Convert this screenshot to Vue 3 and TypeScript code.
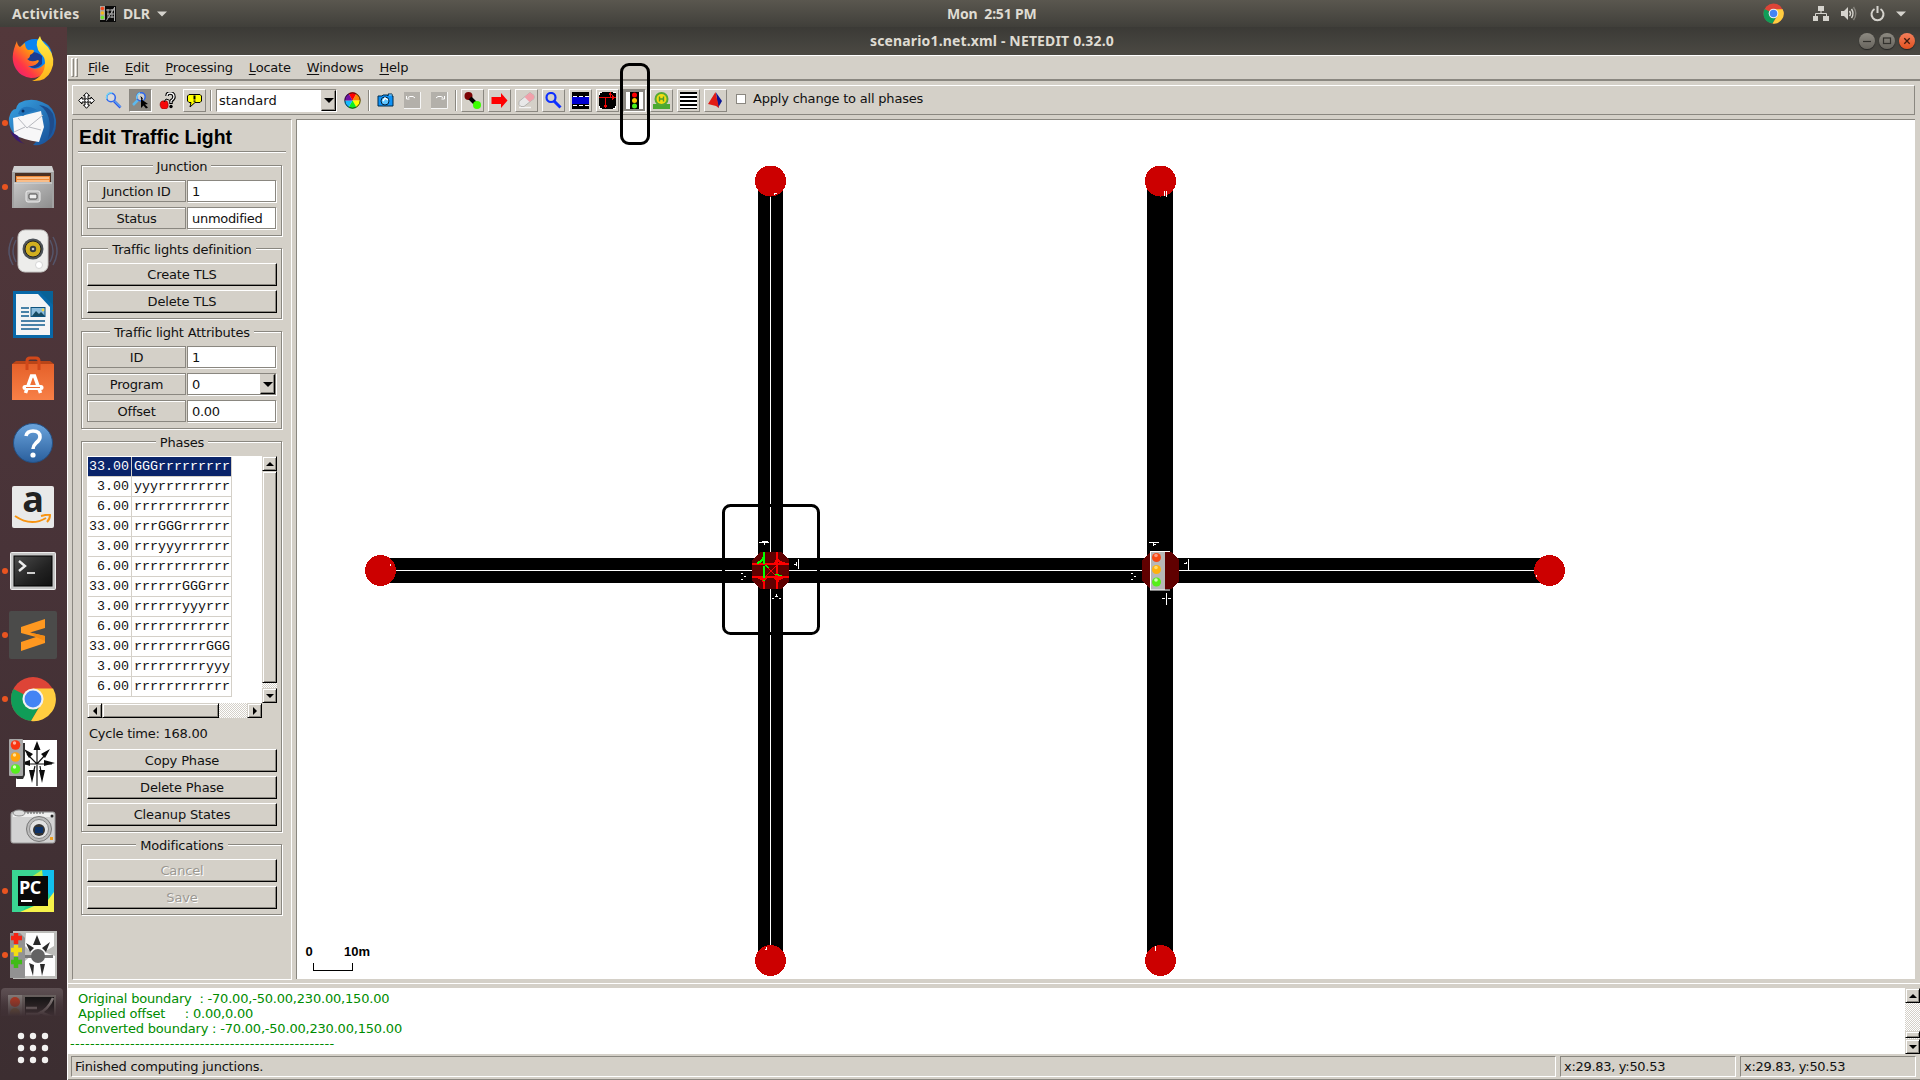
<script setup lang="ts">
interface Phase { duration: string; state: string }

const menus: string[] = ['File', 'Edit', 'Processing', 'Locate', 'Windows', 'Help']

const phases: Phase[] = [
  { duration: '33.00', state: 'GGGrrrrrrrrr' },
  { duration: '3.00', state: 'yyyrrrrrrrrr' },
  { duration: '6.00', state: 'rrrrrrrrrrrr' },
  { duration: '33.00', state: 'rrrGGGrrrrrr' },
  { duration: '3.00', state: 'rrryyyrrrrrr' },
  { duration: '6.00', state: 'rrrrrrrrrrrr' },
  { duration: '33.00', state: 'rrrrrrGGGrrr' },
  { duration: '3.00', state: 'rrrrrryyyrrr' },
  { duration: '6.00', state: 'rrrrrrrrrrrr' },
  { duration: '33.00', state: 'rrrrrrrrrGGG' },
  { duration: '3.00', state: 'rrrrrrrrryyy' },
  { duration: '6.00', state: 'rrrrrrrrrrrr' },
]

const log: string[] = [
  'Original boundary  : -70.00,-50.00,230.00,150.00',
  'Applied offset     : 0.00,0.00',
  'Converted boundary : -70.00,-50.00,230.00,150.00',
]
const rule = '-'.repeat(53)

const deadEnds: [number, number][] = [
  [770.5, 181], [1160.5, 181], [380.5, 570.5], [1549.5, 570.5], [770.5, 960.5], [1160.5, 960.5],
]
const gridDots: number[] = [6, 18, 30]
</script>

<template>
  <div class="desktop">
    <header class="topbar">
      <span class="activities">Activities</span>
      <svg class="app-icon" width="16" height="16" viewBox="0 0 16 16">
        <rect width="16" height="16" fill="#0a0a0a" />
        <rect width="5" height="14" fill="#a9a69f" />
        <circle cx="2.4" cy="2.5" r="1.8" fill="#f6461c" />
        <circle cx="2.4" cy="7" r="1.8" fill="#f4b51c" />
        <circle cx="2.4" cy="11.5" r="1.8" fill="#6be62c" />
        <path d="M6.500 14.500L14.500 1.500M6 4h8M7 8h7M9 11h5M8 3v9M12 3v9M14.500 1v14" stroke="#bbb" stroke-width=".9" fill="none" />
      </svg>
      <span class="app-name">DLR</span>
      <svg class="caret" width="10" height="6" viewBox="0 0 10 6"><path d="M0 .5h10L5 5.5z" fill="#d5d3cd" /></svg>
      <span class="clock">Mon&nbsp; 2:51 PM</span>
      <div class="tray">
        <svg class="tray-chrome" width="21" height="21" viewBox="0 0 48 48">
          <circle cx="24" cy="24" r="23" fill="#dd4437" />
          <path d="M3.5 13.5A23 23 0 0 0 22 47l9-16-7-7z" fill="#109d58" />
          <path d="M24 14h21A23 23 0 0 1 22 47l10-17z" fill="#ffcd40" />
          <circle cx="24" cy="24" r="11" fill="#f1f1f1" /><circle cx="24" cy="24" r="8.6" fill="#4384f4" />
        </svg>
        <svg class="tray-net" width="16" height="16" viewBox="0 0 16 16">
          <path d="M5 0h6v5H5zM0 10h5v5H0zM10 10h6v5h-6z" fill="#d5d3cd" />
          <path d="M8 5v3M2.500 10V7.500h11V10" fill="none" stroke="#d5d3cd" />
        </svg>
        <svg class="tray-sound" width="16" height="16" viewBox="0 0 16 16">
          <path d="M0 5h3l4-4v13l-4-4H0z" fill="#d5d3cd" />
          <path d="M8.500 5q2 2.500 0 5M10.500 3q3 4.500 0 9" fill="none" stroke="#d5d3cd" stroke-width="1.500" />
          <path d="M12.500 1q4.500 6.500 0 13" fill="none" stroke="#85827b" stroke-width="1.400" />
        </svg>
        <svg class="tray-power" width="15" height="16" viewBox="0 0 15 16">
          <path d="M4.500 3A6 6 0 1 0 10.500 3M7.500 0v7" fill="none" stroke="#d5d3cd" stroke-width="2" />
        </svg>
        <svg class="tray-caret" width="10" height="6" viewBox="0 0 10 6"><path d="M0 .5h10L5 5.500z" fill="#d5d3cd" /></svg>
      </div>
    </header>

    <div class="workspace">
      <nav class="dock">
        <div class="slot">
          <svg width="48" height="48" viewBox="0 0 48 48">
            <defs>
              <linearGradient id="ffx" x1="1" y1="0" x2="0" y2="1"><stop offset=".1" stop-color="#fff44f" /><stop offset=".4" stop-color="#ff980e" /><stop offset=".7" stop-color="#ff3647" /><stop offset="1" stop-color="#e31587" /></linearGradient>
              <linearGradient id="ffy" x1="0" y1="0" x2="0" y2="1"><stop offset="0" stop-color="#fff24a" /><stop offset="1" stop-color="#ffb319" /></linearGradient>
            </defs>
            <circle cx="26" cy="21" r="17" fill="#0a84f0" />
            <path d="M19 17q8-1 14 4v8q-8 8-15 0z" fill="#1c3b91" />
            <path d="M8 6q0 4 3 6l5-4q0 5 3 7 6-1 6 1 0 2-4 4 0 3-3 4 4 4 11 1l1 1q-3 6-11 5 6 5 13 1 8-5 6-14 8 8-2 19-5 6-14 6-10-1-15-9Q0 23 8 6z" fill="url(#ffx)" />
            <path d="M31 1q1 5 8 11 9 12 3 24-5 11-19 10 13-5 13-18 0-6-4-9-8-9-1-18z" fill="url(#ffy)" />
          </svg>
        </div>
        <div class="slot running">
          <svg width="50" height="50" viewBox="0 0 50 50">
            <defs><linearGradient id="tbd" x1="0" y1="0" x2="1" y2="1"><stop offset="0" stop-color="#39a5e4" /><stop offset="1" stop-color="#164a93" /></linearGradient></defs>
            <path d="M11 5Q22-1 34 4q12 4 14 18 1 15-9 21-5 5-14 4 4-4 5-6L9 39Q0 31 1 20q2-9 7-9Q9 7 11 5z" fill="url(#tbd)" />
            <path d="M31 7q15 9 9 34 9-12 5-25-4-8-14-9z" fill="#1e4c8b" />
            <path d="M5 20l28-7 3 16-5 15q-16-2-25-8z" fill="#f7f7f8" />
            <path d="M10 20l9 10 16-13M17 29l-11 5M21 29l12 3" fill="none" stroke="#b6b8be" />
            <path d="M10 16Q14 4 29 12q-9 2-14 6z" fill="#2275bc" /><circle cx="15" cy="13" r="1.500" fill="#0b2e5f" />
            <path d="M2 33q5 11 15 13-6-3-7-8z" fill="#3b1a70" />
          </svg>
        </div>
        <div class="slot running">
          <svg width="44" height="46" viewBox="0 0 44 46">
            <defs><linearGradient id="cab" x1="0" y1="0" x2="1" y2="1"><stop offset="0" stop-color="#c4c4c4" /><stop offset="1" stop-color="#8e8e8e" /></linearGradient></defs>
            <path d="M3 2h38l2 6v35H1V8z" fill="#cfcfcf" /><path d="M1 8h42v36H1z" fill="#a2a2a2" />
            <path d="M4 9h36v9H4z" fill="#4c3022" /><path d="M5 12h34v6H5z" fill="#f08a38" /><path d="M6 14h32M6 17h32" stroke="#fff0d9" stroke-width="1.200" />
            <path d="M3 19h38v25H3z" fill="url(#cab)" /><path d="M3 19h38" stroke="#ddd" />
            <rect x="15" y="27" width="14" height="11" rx="2" fill="#bdbdbd" stroke="#ececec" /><rect x="18" y="30" width="8" height="5" rx="1" fill="#eee" stroke="#444" />
          </svg>
        </div>
        <div class="slot">
          <svg width="50" height="46" viewBox="0 0 50 46">
            <path d="M5 9q-8 14 0 28M45 9q8 14 0 28M8 12q-6 11 0 22M42 12q6 11 0 22" fill="none" stroke="#55556a" stroke-width="1.500" />
            <rect x="10" y="2" width="30" height="42" rx="7" fill="#ededeb" stroke="#c7c7c5" />
            <circle cx="25" cy="21" r="10.500" fill="#4c5257" /><circle cx="25" cy="21" r="8" fill="#d1af20" stroke="#222" />
            <circle cx="25" cy="21" r="3.200" fill="#343b40" /><circle cx="25" cy="21" r="1.300" fill="#c8c8c8" /><circle cx="31" cy="37" r="3.500" fill="#fff" stroke="#d5d5d5" />
          </svg>
        </div>
        <div class="slot">
          <svg width="42" height="50" viewBox="0 0 42 50">
            <path d="M1 1h27l13 13v34H1z" fill="#0868a8" /><path d="M4 4h22l12 13v28H4z" fill="#f4f4f5" /><path d="M27 1h14v14z" fill="#086297" />
            <path d="M9 18h8M9 22h8M9 26h8M9 31h24M9 35h24M9 39h18" stroke="#105c8e" stroke-width="1.700" />
            <rect x="19" y="17.500" width="14" height="9" fill="#8cbcdc" stroke="#0d527e" /><path d="M20 26l4-5 3 3 2-2 4 4z" fill="#174b62" /><circle cx="31" cy="20" r="1.400" fill="#f3d344" />
          </svg>
        </div>
        <div class="slot">
          <svg width="44" height="46" viewBox="0 0 44 46">
            <defs><linearGradient id="bag" x1="0" y1="0" x2="0" y2="1"><stop offset="0" stop-color="#e5612a" /><stop offset="1" stop-color="#f78047" /></linearGradient></defs>
            <path d="M1 8h42v36H1z" fill="url(#bag)" /><path d="M1 8l4-3h34l4 3z" fill="#b94518" />
            <path d="M16 14V5q0-3 3-3h6q3 0 3 3v9" fill="none" stroke="#d1481a" stroke-width="3" />
            <path d="M14.500 37l6-17h3l6 17" fill="none" stroke="#fff" stroke-width="3.500" /><path d="M14 31.500h16" stroke="#fff" stroke-width="5" stroke-linecap="round" /><path d="M15 31.500h14" stroke="#ee6b32" stroke-width="1" />
          </svg>
        </div>
        <div class="slot">
          <svg width="42" height="42" viewBox="0 0 42 42">
            <defs><linearGradient id="hlp" x1="0" y1="0" x2="0" y2="1"><stop offset="0" stop-color="#6ba4dc" /><stop offset="1" stop-color="#2a5f9d" /></linearGradient></defs>
            <circle cx="21" cy="21" r="19.500" fill="url(#hlp)" stroke="#245084" />
            <path d="M14 14q1-5 7-5 7 0 7 6 0 3-4 6-3 3-3 6" fill="none" stroke="#fff" stroke-width="3.600" /><circle cx="21" cy="33" r="2.600" fill="#fff" />
          </svg>
        </div>
        <div class="slot">
          <div class="amazon">
            <span>a</span>
            <svg width="38" height="12" viewBox="0 0 38 12"><path d="M1 2Q17 13 32 4M27 2q7-2 9-1 0 4-3 7" fill="none" stroke="#f79311" stroke-width="2" /></svg>
          </div>
        </div>
        <div class="slot running">
          <svg width="46" height="38" viewBox="0 0 46 38">
            <defs><linearGradient id="trm" x1="0" y1="0" x2="1" y2="1"><stop offset="0" stop-color="#4b4b4b" /><stop offset=".6" stop-color="#222" /><stop offset="1" stop-color="#111" /></linearGradient></defs>
            <rect x=".5" y=".5" width="45" height="37" rx="1" fill="#c6c6c6" stroke="#eee" /><rect x="4" y="4" width="38" height="30" fill="url(#trm)" stroke="#000" />
            <path d="M9 9l6 5-6 5" fill="none" stroke="#eee" stroke-width="2.400" /><path d="M17 21h8" stroke="#eee" stroke-width="1.700" />
          </svg>
        </div>
        <div class="slot running">
          <svg width="48" height="48" viewBox="0 0 48 48">
            <rect width="48" height="48" rx="2" fill="#4b4b4a" />
            <path d="M12 16l24-8v9l-15 4.500L36 25v7l-24 8v-9l15-5-15-4z" fill="#ff9820" /><path d="M21 21.500L36 25v5l-9-4z" fill="#f28a13" />
          </svg>
        </div>
        <div class="slot running">
          <svg width="46" height="46" viewBox="0 0 48 48">
            <circle cx="24" cy="24" r="23" fill="#dd4437" />
            <path d="M3.500 13.500A23 23 0 0 0 22 47l10-17-8-6z" fill="#109d58" />
            <path d="M24 13h21A23 23 0 0 1 22 47l10-17z" fill="#ffcd40" />
            <circle cx="24" cy="24" r="11" fill="#f1f1f1" /><circle cx="24" cy="24" r="8.800" fill="#4384f4" />
          </svg>
        </div>
        <div class="slot">
          <svg width="48" height="48" viewBox="0 0 48 48">
            <rect x="7" y="1" width="41" height="47" fill="#fff" />
            <path d="M28 47V5M28 25L18 15M28 25l9-10M27 25H13M29 25h14M26 27l-3 12M31 27l2 12" stroke="#111" stroke-width="1.200" />
            <path d="M28 2l-3.500 9h7zM41 10l-9 5 4 4zM46 24l-11-3v6zM15 10l9 5-4 4zM12 24l9-3v6zM20 31h6l-3 13zM30 31h6l-3 13z" fill="#0c0c0c" />
            <path d="M3 36l5 4h6l2-4V4h-3z" fill="#333" /><rect width="14" height="37" rx="1" fill="#a7a7a7" />
            <circle cx="6.500" cy="6" r="4.800" fill="#f93511" /><circle cx="6.500" cy="18" r="4.800" fill="#ffa20b" /><circle cx="6.500" cy="30" r="4.800" fill="#57ee20" />
            <circle cx="5.500" cy="4" r="1.700" fill="#ffb39e" /><circle cx="5.500" cy="16" r="1.700" fill="#ffe39e" /><circle cx="5.500" cy="28" r="1.700" fill="#d7ffba" />
          </svg>
        </div>
        <div class="slot">
          <svg width="46" height="36" viewBox="0 0 46 36">
            <rect x="1" y="3" width="44" height="31" rx="2" fill="#d2d2d2" stroke="#9d9d9d" /><path d="M3 4h40v4H3z" fill="#efefef" />
            <ellipse cx="9" cy="4" rx="6" ry="3" fill="#ddd" stroke="#8a8a8a" /><path d="M17 4h18" stroke="#555" stroke-dasharray="2 1" />
            <circle cx="29" cy="20" r="12.500" fill="#bbb" stroke="#777" /><circle cx="29" cy="20" r="9.500" fill="#e1e1e1" stroke="#888" />
            <circle cx="29" cy="21" r="6" fill="#333" /><rect x="25" y="18" width="8" height="6" fill="#0d3267" /><circle cx="42" cy="7" r="1.500" fill="#222" /><rect x="40" y="28" width="3" height="3" fill="#f0a020" />
          </svg>
        </div>
        <div class="slot running">
          <div class="pycharm">
            <svg width="42" height="42" viewBox="0 0 42 42">
              <rect width="42" height="42" fill="#22d08c" /><path d="M0 0h15l15 0v10L10 42H0z" fill="#3ad693" /><path d="M30 0h12v30l-10-12z" fill="#12c0ed" /><path d="M30 0l-14 9h15z" fill="#b8ec50" /><path d="M42 22v20H8l28-12z" fill="#f6f24a" />
              <rect x="6" y="6" width="30" height="30" fill="#080808" /><path d="M9 31h11" stroke="#fff" stroke-width="2" />
            </svg>
            <span>PC</span>
          </div>
        </div>
        <div class="slot running">
          <svg width="48" height="48" viewBox="0 0 48 48">
            <rect x="4" width="44" height="48" fill="#bcbcb9" /><path d="M17 2h28v13L35 21l11 4v20H16V30l8-7-8-8z" fill="#fdfdfd" />
            <path d="M28 4l4 10h-8zM17 12l8 5-4 4zM41 11l-8 6 4 4zM20 32l5 2-1 11zM31 33h5l-3 12z" fill="#292929" /><path d="M16 24h28v3H16z" fill="#777" />
            <circle cx="29" cy="25" r="7" fill="#636363" /><path d="M1 2h10l5 5v40H1z" fill="#929292" />
            <path d="M7 2v11M2 7h11" stroke="#f42514" stroke-width="4.500" /><path d="M7 14v11M2 19h11" stroke="#f3dc13" stroke-width="4.500" /><path d="M7 26v11M2 31h11" stroke="#40bb17" stroke-width="4.500" />
          </svg>
        </div>
        <div class="slot partial">
          <svg width="48" height="22" viewBox="0 0 48 22">
            <rect width="48" height="22" fill="#69615f" /><rect x="17" y="2" width="29" height="20" fill="#111" /><path d="M18 19h12q10-4 15-16M32 17l12 5M18 13h11" fill="none" stroke="#8e8785" stroke-width="2.500" />
            <rect width="14" height="22" fill="#817a78" /><circle cx="7" cy="7" r="5" fill="#b23822" /><circle cx="7" cy="18" r="5" fill="#83633a" />
          </svg>
        </div>
        <svg class="apps" width="36" height="36" viewBox="0 0 36 36">
          <template v-for="y in gridDots" :key="y"><circle v-for="x in gridDots" :key="x" :cx="x" :cy="y" r="3.200" fill="#f2f1f0" /></template>
        </svg>
      </nav>

      <main class="window">
        <div class="titlebar">
          <span>scenario1.net.xml - NETEDIT 0.32.0</span>
          <div class="winbtns">
            <i><svg width="16" height="16" viewBox="0 0 16 16"><path d="M4 8.500h8" stroke="#32312d" stroke-width="1.200" /></svg></i>
            <i><svg width="16" height="16" viewBox="0 0 16 16"><rect x="4.500" y="5" width="7" height="5.500" fill="none" stroke="#32312d" stroke-width="1.200" /></svg></i>
            <i class="close"><svg width="16" height="16" viewBox="0 0 16 16"><path d="M5.300 5.300l5.400 5.400M10.700 5.300l-5.400 5.400" stroke="#3d1a0d" stroke-width="1.300" /></svg></i>
          </div>
        </div>

        <div class="client">
          <div class="menubar">
            <b class="grip"></b><b class="grip"></b>
            <span v-for="m in menus" :key="m" class="menu"><u>{{ m[0] }}</u>{{ m.slice(1) }}</span>
          </div>

          <div class="toolbar">
            <div class="tool">
              <svg width="17" height="17" viewBox="0 0 17 17"><path d="M8.500.7l3 3H10v3h3V5l3.300 3.500L13 12v-2h-3v3h1.500l-3 3.300-3-3.300H7v-3H4v2L.7 8.500 4 5v2h3V3.700H5.500z" fill="#fff" stroke="#000" /><circle cx="8.500" cy="8.500" r="1.800" fill="#fff" stroke="#000" /></svg>
            </div>
            <div class="tool">
              <svg width="17" height="17" viewBox="0 0 17 17"><path d="M9 9l6.500 6.500" stroke="#2a55e8" stroke-width="2.600" /><path d="M9.500 9l6 6" stroke="#7fdbf3" /><circle cx="6" cy="5.500" r="4.300" fill="#dadada" stroke="#3068ee" stroke-width="1.600" /><path d="M2 7a4.300 4.300 0 0 1 5-6" fill="none" stroke="#71d6f5" stroke-width="1.400" /></svg>
            </div>
            <div class="tool down">
              <svg width="17" height="17" viewBox="0 0 17 17"><path d="M6 8l-5 5" stroke="#5cb8ed" stroke-width="2.500" /><circle cx="9" cy="4.800" r="4.200" fill="#ccc" stroke="#3169e8" stroke-width="1.600" /><path d="M5 7a5 5 0 0 1 3-6" stroke="#79d9f5" fill="none" stroke-width="1.400" /><path d="M8 3l3 3v2H9z" fill="#000" stroke="#fff" stroke-width=".5" /><path d="M9 7l7 5-3 .5 3 3-2 1-2.500-3L9 16z" fill="#000" /></svg>
            </div>
            <div class="tool">
              <svg width="17" height="17" viewBox="0 0 17 17"><path d="M8 4q0-3 3-3 4 0 4 4 0 2-3 4v3" stroke="#000" stroke-width="3.500" fill="none" /><path d="M8 4q0-3 3-3 4 0 4 4 0 2-3 4v2" stroke="#fff" stroke-width="1.300" fill="none" /><circle cx="12" cy="14.500" r="1.700" fill="#000" /><path d="M6 9q-5-1-5 4 1 5 5 4 4 0 3-6l-1-2z" fill="#f60808" stroke="#700" stroke-width=".5" /><path d="M5 10l2-3 3 1" fill="none" stroke="#111" /></svg>
            </div>
            <div class="tool up">
              <svg width="17" height="17" viewBox="0 0 17 17"><path d="M3 2.500h11l1.500 1.500v5L14 10.500H9L4 15l1-4.500H3L1.500 9V4z" fill="#ff0" stroke="#000" /><path d="M8.500 3.500v4M8.500 8.500v1.200" stroke="#000" stroke-width="2" /></svg>
            </div>
            <b class="sep"></b>
            <div class="combo"><span>standard</span><b class="drop"><i></i></b></div>
            <div class="tool">
              <svg width="17" height="17" viewBox="-8.500 -8.500 17 17"><path d="M0 0L-4-7A8 8 0 0 1 4-7z" fill="#f00" /><path d="M0 0L4-7A8 8 0 0 1 8 0z" fill="#ff8500" /><path d="M0 0H8A8 8 0 0 1 4 7z" fill="#ff0" /><path d="M0 0L4 7A8 8 0 0 1-4 7z" fill="#0df020" /><path d="M0 0L-4 7A8 8 0 0 1-8 0z" fill="#15baff" /><path d="M0 0H-8A8 8 0 0 1-4-7z" fill="#7112a5" /><circle r="7.700" fill="none" stroke="#111" stroke-width=".8" /></svg>
            </div>
            <b class="sep"></b>
            <div class="tool">
              <svg width="17" height="17" viewBox="0 0 17 17"><path d="M1 4h4l1-1h4l1 1V2h4v2h1v10H1z" fill="#0e93f8" stroke="#012a4b" /><path d="M12 3h3" stroke="#8ad6ff" /><circle cx="8" cy="9" r="4" fill="#60c6ff" stroke="#05233d" /><path d="M6 9l2-3 3 2" stroke="#fff" stroke-width="1.500" fill="none" /></svg>
            </div>
            <div class="tool"><svg width="17" height="17" viewBox="0 0 17 17"><rect width="16" height="16" fill="#b3b0aa" /><path d="M0 16.500h16.500V0" stroke="#f5f5f5" fill="none" /><path d="M2.500 4v3h3M4 5.500l2-1h3l2 1.500" stroke="#fff" fill="none" /></svg></div>
            <div class="tool"><svg width="17" height="17" viewBox="0 0 17 17"><rect width="16" height="16" fill="#b3b0aa" /><path d="M0 16.500h16.500V0" stroke="#f5f5f5" fill="none" /><path d="M13.500 4v3h-3M12 5.500l-2-1H7L5 6" stroke="#fff" fill="none" /></svg></div>
            <b class="sep"></b>
            <div class="tool up"><svg width="17" height="17" viewBox="0 0 17 17"><circle cx="4.500" cy="4" r="4" fill="#7c0505" /><path d="M6 6l5 5" stroke="#000" stroke-width="4" /><circle cx="13" cy="13" r="4" fill="#3cff00" /></svg></div>
            <div class="tool up"><svg width="17" height="17" viewBox="0 0 17 17"><path d="M.5 5H10V1l6.500 7.500L10 16v-4H.500z" fill="#f00" /></svg></div>
            <div class="tool up"><svg width="17" height="17" viewBox="0 0 17 17"><path d="M1 15.500h12" stroke="#f3f3f3" stroke-width="1.500" /><path d="M12 .5l4 3v3L6 14.500H3L1 12.500v-3z" fill="#e8e8e8" stroke="#999" stroke-width=".6" /><path d="M12 .5l4 3v3l-4.500 3.500-5-5z" fill="#f1a0aa" /></svg></div>
            <div class="tool up"><svg width="17" height="17" viewBox="0 0 17 17"><circle cx="6" cy="5.500" r="4.500" fill="none" stroke="#0d2fff" stroke-width="2.200" /><path d="M9 9l6.500 6.500" stroke="#0d2fff" stroke-width="3" /></svg></div>
            <div class="tool up"><svg width="17" height="17" viewBox="0 0 17 17" shape-rendering="crispEdges"><rect width="17" height="17" /><path d="M0 5h17v7H0z" fill="#0000d2" /><path d="M1 4.500h4M7 4.500h4M13 4.500h4M1 13.500h4M7 13.500h4M13 13.500h4" stroke="#fff" /></svg></div>
            <div class="tool up"><svg width="17" height="17" viewBox="0 0 17 17" shape-rendering="crispEdges"><rect width="17" height="17" /><path d="M0 .5h3M.5 0v3M14 16.500h3M16.500 14v3M0 16.500h3M.5 14v3M14 .5h3" stroke="#fff" /><path d="M0 5.500h15M6.500 5v10M11.500 5V1" stroke="#ee0505" /><path d="M17 5.500l-4-2.500v5zM6.500 16.500L4 12.500h5zM11.500 0l-2 3h4z" fill="#ee0505" /></svg></div>
            <div class="tool down"><svg width="17" height="17" viewBox="0 0 17 17"><rect width="17" height="17" fill="#fff" /><rect x="4" width="9" height="17" /><circle cx="8.500" cy="3" r="2.500" fill="#f00" /><circle cx="8.500" cy="8.500" r="2.500" fill="#ffc800" /><circle cx="8.500" cy="14" r="2.500" fill="#4cf01e" /></svg></div>
            <div class="tool up"><svg width="17" height="17" viewBox="0 0 17 17"><path d="M0 12h17v5H0z" fill="#4aa931" /><circle cx="8.500" cy="7" r="7" fill="#54a935" /><circle cx="8.500" cy="7" r="5" fill="#f2dc11" /><path d="M6.500 4.500v5M10.500 4.500v5M6.500 7h4" stroke="#4d9c2b" stroke-width="1.400" /></svg></div>
            <div class="tool up"><svg width="17" height="17" viewBox="0 0 17 17" shape-rendering="crispEdges"><rect width="17" height="17" fill="#fff" /><path d="M0 1h17M0 5h17M0 9h17M0 13h17M0 17h17" stroke="#000" stroke-width="2" /></svg></div>
            <div class="tool up"><svg width="17" height="17" viewBox="0 0 17 17"><path d="M9 .5L15 9l-4 7z" fill="#0c1595" /><path d="M8.500 0L12 16l-3-2-8-2z" fill="#e11a15" /></svg></div>
            <label class="check"><i></i><span>Apply change to all phases</span></label>
          </div>

          <div class="body">
            <aside class="panel">
              <h1>Edit Traffic Light</h1>
              <section class="group">
                <h2>Junction</h2>
                <div class="row"><span class="key">Junction ID</span><span class="field">1</span></div>
                <div class="row"><span class="key">Status</span><span class="field">unmodified</span></div>
              </section>
              <section class="group">
                <h2>Traffic lights definition</h2>
                <button>Create TLS</button>
                <button>Delete TLS</button>
              </section>
              <section class="group">
                <h2>Traffic light Attributes</h2>
                <div class="row"><span class="key">ID</span><span class="field">1</span></div>
                <div class="row"><span class="key">Program</span><span class="field">0<b class="drop"><i></i></b></span></div>
                <div class="row"><span class="key">Offset</span><span class="field">0.00</span></div>
              </section>
              <section class="group">
                <h2>Phases</h2>
                <div class="tablebox">
                  <div class="sheet">
                    <div v-for="(p, i) in phases" :key="i" class="phase" :class="{ selected: i === 0 }">
                      <span class="dur">{{ p.duration }}</span><span class="state">{{ p.state }}</span>
                    </div>
                  </div>
                  <div class="vscroll">
                    <b class="sbtn"><i class="arr-up"></i></b><b class="thumb"></b><b class="track"></b><b class="sbtn"><i class="arr-down"></i></b>
                  </div>
                  <div class="hscroll">
                    <b class="sbtn"><i class="arr-left"></i></b><b class="thumb"></b><b class="track"></b><b class="sbtn"><i class="arr-right"></i></b>
                  </div>
                </div>
                <p class="cycle">Cycle time: 168.00</p>
                <button>Copy Phase</button>
                <button>Delete Phase</button>
                <button>Cleanup States</button>
              </section>
              <section class="group">
                <h2>Modifications</h2>
                <button disabled>Cancel</button>
                <button disabled>Save</button>
              </section>
            </aside>

            <div class="canvas">
              <svg width="1617" height="859" viewBox="297 120 1617 859" shape-rendering="crispEdges">
                <g fill="#000">
                  <rect x="758" y="181" width="25" height="780" /><rect x="1147" y="181" width="26" height="780" /><rect x="380" y="558" width="1170" height="25" />
                </g>
                <path d="M770.500 196V552M770.500 589V946M396 570.500H752M789 570.500H1142M1179 570.500H1534" stroke="#fff" fill="none" />
                <circle v-for="([x, y], i) in deadEnds" :key="i" :cx="x" :cy="y" r="15.500" fill="#c00" />
                <path d="M774.500 195v-1.500h2M1164.500 191v5M1166.500 191v6M765 949.500h2M766.500 947v2M1155.500 946v5M390.500 564v2M1536.500 575v2" stroke="#fff" fill="none" />
                <path d="M760 552h21l8 8v21l-8 8h-21l-8-8v-21zM1150 552h21l8 8v21l-8 8h-21l-8-8v-21z" fill="#600000" />
                <g fill="none" stroke="#f00" stroke-width="2">
                  <path d="M752 564H789M752 577H789M777 552V589M764 577V589" />
                  <path d="M766 566l10 10M776 566l-10 10" stroke-width="1" />
                  <path d="M777 556q0 7 8 7M777 584q0-6 8-7M764 584q0-6-8-7M773 564q4-1 4-7M768 577q-4 1-4 6M773 577q4 1 4 6" />
                </g>
                <path d="M764 552V581M764 556q-1 6-7 7" stroke="#0f0" stroke-width="2" stroke-dasharray="12 2" fill="none" />
                <path d="M765 565l4 3M775 574l7 2" stroke="#0f0" fill="none" />
                <g stroke="#fff" fill="none">
                  <path d="M759 542.500h10M762 541.500h6M764 543v2M798.500 559v10M794 564.500h2M796 562v4M741 573.500h2M744 576.500h2M741 579.500h2M776.500 594v3M772 598h2M775 596h3M779 598h2" />
                  <path d="M1149 542.500h10M1154 544h2M1153.500 543v3M1188.500 559v11M1184 563.500h2M1186.500 562v2M1131 573.500h2M1134 576.500h2M1131 579.500h2M1166.500 593v12M1162 598.500h3M1168 598.500h3" />
                </g>
                <g shape-rendering="auto">
                  <rect x="1150" y="551" width="15" height="39" fill="#b7b7b7" /><path d="M1150.500 590v-39M1150 551.500h20M1150 590h20" stroke="#fff" fill="none" />
                  <circle cx="1156.500" cy="557.500" r="4.500" fill="#f64a14" /><circle cx="1156.500" cy="569.500" r="4.500" fill="#ffb10d" /><circle cx="1156.500" cy="582" r="4.500" fill="#56ef18" />
                  <circle cx="1156" cy="555.500" r="1.800" fill="#ff9b82" /><circle cx="1156" cy="567.500" r="1.800" fill="#ffdc6e" /><circle cx="1156" cy="580" r="1.800" fill="#d0ffb4" />
                </g>
                <g class="scale" shape-rendering="auto">
                  <text x="305.500" y="956">0</text><text x="344" y="956">10m</text>
                  <path d="M313.500 963v7.500h39V963" fill="none" stroke="#000" shape-rendering="crispEdges" />
                </g>
                <rect x="723.500" y="505.500" width="95" height="128" rx="7" fill="none" stroke="#000" stroke-width="3" shape-rendering="auto" />
              </svg>
            </div>
          </div>

          <div class="messages">
            <div class="log">
              <p v-for="line in log" :key="line">{{ line }}</p>
              <p class="rule">{{ rule }}</p>
            </div>
            <div class="vscroll msgscroll">
              <b class="sbtn"><i class="arr-up"></i></b><b class="track"></b><b class="thumb"></b><b class="track end"></b><b class="sbtn"><i class="arr-down"></i></b>
            </div>
          </div>

          <footer class="status">
            <span class="main">Finished computing junctions.</span><span class="pos">x:29.83, y:50.53</span><span class="pos">x:29.83, y:50.53</span>
          </footer>
        </div>
      </main>
    </div>
    <div class="marker"></div>
  </div>
</template>

<style>
html, body { margin: 0; overflow: hidden; background: #3b3a36; }
</style>

<style scoped>
* { box-sizing: border-box; }
.desktop { position: relative; width: 1920px; height: 1080px; display: flex; flex-direction: column; overflow: hidden; font: 13px/15px "DejaVu Sans", sans-serif; color: #111; }
svg { display: block; flex: none; }
.topbar { height: 27px; flex: none; display: flex; align-items: center; background: linear-gradient(#5a574f, #403f3a); font: 700 14px/27px "Noto Sans", sans-serif; color: #dfdbd2; padding-left: 12px; }
.activities { width: 88px; letter-spacing: .25px; white-space: nowrap; }
.app-icon { margin-right: 7px; }
.app-name { width: 34px; letter-spacing: -.2px; }
.clock { margin-left: 780px; white-space: pre; width: 111px; letter-spacing: -.2px; }
.tray { margin-left: auto; display: flex; align-items: center; width: 157px; }
.tray-net { margin-left: 29px; }
.tray-sound { margin-left: 12px; }
.tray-power { margin-left: 13px; }
.tray-caret { margin-left: 11px; }
.workspace { flex: 1; min-height: 0; display: flex; }
.dock { width: 67px; flex: none; display: flex; flex-direction: column; align-items: center; background: linear-gradient(#53383b, #483338 50%, #3c2e31); }
.slot { width: 67px; height: 64px; flex: none; display: flex; align-items: center; justify-content: center; position: relative; padding-right: 1px; }
.slot.running::before { content: ""; position: absolute; left: 2px; top: 29px; width: 6px; height: 6px; border-radius: 3px; background: #e95420; }
.slot.partial { width: 62px; height: 28px; margin: 1px 3px 0 0; align-items: flex-start; padding-top: 7px; background: linear-gradient(#5e5053, #3f3034); border-radius: 4px 4px 0 0; overflow: hidden; }
.slot.partial::after { content: ""; position: absolute; inset: 7px 0 0; background: linear-gradient(#3f303400, #3f3034); }
.apps { margin: 14px 1px 0 0; }
.amazon { width: 42px; height: 42px; background: #e9e9e9; border-radius: 2px; display: flex; flex-direction: column; align-items: center; }
.amazon span { font: 700 36px/26px "Open Sans", sans-serif; height: 28px; color: #222; }
.pycharm { position: relative; }
.pycharm span { position: absolute; left: 7px; top: 7px; font: 700 18px/20px "Open Sans", sans-serif; letter-spacing: -.5px; color: #fff; }
.window { flex: 1; min-width: 0; display: flex; flex-direction: column; }
.titlebar { height: 28px; flex: none; display: flex; align-items: center; background: linear-gradient(#3b3a36, #4b4943); color: #dfdbd2; font: 700 14px/28px "Noto Sans", sans-serif; }
.titlebar > span { margin-left: 803px; white-space: nowrap; letter-spacing: .15px; }
.winbtns { margin-left: auto; display: flex; gap: 4px; margin-right: 5px; }
.winbtns i { width: 16px; height: 16px; border-radius: 8px; background: linear-gradient(#8d8a82, #67645d); box-shadow: 0 1px 1px #222; }
.winbtns i.close { background: linear-gradient(#f47f5c, #e2511f); }
.client { flex: 1; min-height: 0; display: flex; flex-direction: column; background: #d4d0c8; border-top: 1px solid #fff; border-left: 1px solid #fff; letter-spacing: -.2px; }
.menubar { height: 25px; flex: none; border-bottom: 2px solid #8a8780; display: flex; align-items: center; padding-left: 3px; }
.grip { width: 3px; height: 19px; border: 1px solid #fff; border-right-color: #8a8780; border-bottom-color: #8a8780; margin-right: 1px; }
.menu { margin-left: 9px; margin-right: 7px; }
.menu u { text-underline-offset: 2px; }
.toolbar { height: 30px; flex: none; margin: 4px 5px 0 4px; border: 1px solid; border-color: #fff #8a8780 #8a8780 #fff; display: flex; align-items: center; gap: 4px; padding-left: 2px; }
.tool { width: 23px; height: 23px; display: flex; align-items: center; justify-content: center; flex: none; border: 1px solid transparent; }
.tool.up { border-color: #fff #8a8780 #8a8780 #fff; }
.tool.down { background: #8c8983; border-color: #8a8780 #fff #fff #8a8780; }
.sep { width: 2px; height: 21px; border-left: 1px solid #8a8780; border-right: 1px solid #fff; }
.combo { width: 121px; height: 23px; background: #fff; border: 1px solid; border-color: #8a8780 #fff #fff #8a8780; display: flex; align-items: center; justify-content: space-between; padding-left: 2px; letter-spacing: 0; }
.drop { width: 15px; align-self: stretch; border: 1px solid; border-color: #d4d0c8 #000 #000 #d4d0c8; background: #d4d0c8; display: flex; align-items: center; justify-content: center; box-shadow: inset -1px -1px #8a8780; }
.drop i { border: 5px solid transparent; border-top-color: #000; border-bottom: 0; }
.check { display: flex; align-items: center; margin-left: 5px; gap: 7px; height: 19px; align-self: flex-start; margin-top: 3px; }
.check i { width: 10px; height: 10px; background: #fff; border: 1px solid #8a8780; }
.body { height: 861px; flex: none; margin: 4px 5px 0 4px; display: flex; gap: 4px; }
.panel { width: 220px; flex: none; border: 1px solid; border-color: #8a8780 #fff #fff #8a8780; padding: 0 8px; }
h1 { margin: 0 -3px 12px; height: 33px; border-bottom: 1px solid #fff; box-shadow: inset 0 -1px #8a8780; padding-left: 1px; font: 700 19.4px/34px "Liberation Sans", sans-serif; letter-spacing: 0; color: #000; white-space: nowrap; }
.group { border: 1px solid #8a8780; box-shadow: inset 1px 1px #fff, 1px 1px #fff; padding: 14px 4px 5px 5px; margin-bottom: 12px; display: flex; flex-direction: column; gap: 4px; width: 201px; }
.group h2 { margin: -21px auto 2px; height: 15px; padding: 0 4px; background: #d4d0c8; font: 13px/15px "DejaVu Sans", sans-serif; }
.row { display: flex; height: 23px; gap: 1px; }
.key { width: 99px; text-align: center; line-height: 22px; border: 1px solid #8a8780; box-shadow: inset 1px 1px #fff; height: 22px; }
.field { flex: 1; height: 22px; line-height: 21px; background: #fff; border: 1px solid #8a8780; box-shadow: 1px 1px #fff; padding-left: 4px; display: flex; justify-content: space-between; margin-right: 1px; letter-spacing: -.3px; }
button { height: 23px; flex: none; width: 190px; padding: 0; background: #d4d0c8; border: 1px solid; border-color: #fff #000 #000 #fff; box-shadow: inset -1px -1px #8a8780; font: 13px/20px "DejaVu Sans", sans-serif; letter-spacing: -.15px; color: #111; }
button:disabled { color: #9b9892; text-shadow: 1px 1px #fff; }
.tablebox { display: grid; grid-template: 247px 15px / 175px 15px; letter-spacing: 0; }
.sheet { background: #fff; padding: 1px 0 0 1px; font: 13.333px/20px "Liberation Mono", monospace; }
.phase { display: flex; height: 20px; width: 144px; border-bottom: 1px solid #d4d0c8; border-right: 1px solid #d4d0c8; }
.dur { width: 44px; text-align: right; padding-right: 2px; border-right: 1px solid #d4d0c8; }
.state { padding-left: 2px; }
.selected { background: #0a246a; color: #fff; }
.vscroll, .hscroll { display: flex; background: repeating-conic-gradient(#fff 0 25%, #d4d0c8 0 50%) 0 0 / 2px 2px; }
.vscroll { flex-direction: column; }
.sbtn, .thumb { flex: none; width: 15px; height: 15px; background: #d4d0c8; border: 1px solid; border-color: #d4d0c8 #000 #000 #d4d0c8; box-shadow: inset 1px 1px #fff, inset -1px -1px #8a8780; display: flex; align-items: center; justify-content: center; }
.track { flex: 1; }
.vscroll .thumb { height: 212px; }
.hscroll .thumb { width: 117px; }
.msgscroll .thumb { height: 7px; }
.msgscroll .end { flex: none; height: 1px; }
.sbtn i { border: 4px solid transparent; }
.arr-up { border-bottom-color: #000 !important; border-top: 0 !important; }
.arr-down { border-top-color: #000 !important; border-bottom: 0 !important; }
.arr-left { border-right-color: #000 !important; border-left: 0 !important; }
.arr-right { border-left-color: #000 !important; border-right: 0 !important; }
.cycle { margin: 4px 0 4px 2px; height: 15px; letter-spacing: -.25px; }
.canvas { flex: 1; border-left: 1px solid #8a8780; border-top: 1px solid #8a8780; background: #fff; height: 860px; overflow: hidden; }
.scale text { font: 700 13px "Liberation Sans", sans-serif; letter-spacing: 0; }
.messages { height: 71px; flex: none; margin-top: 3px; border-top: 1px solid #fff; padding-top: 4px; display: flex; }
.log { flex: 1; background: #fff; padding: 3px 0 0 11px; color: #008c00; margin-left: -1px; }
.log p { margin: 0; height: 15px; white-space: pre; }
.log .rule { margin-left: -8px; letter-spacing: .3px; }
.status { height: 26px; flex: none; display: flex; gap: 4px; padding: 2px 4px 2px 3px; border-bottom: 1px solid #8a8780; }
.status span { border: 1px solid; border-color: #8a8780 #fff #fff #8a8780; padding-left: 3px; line-height: 19px; height: 21px; white-space: nowrap; }
.status .main { flex: 1; }
.status .pos { width: 176px; letter-spacing: -.3px; }
.marker { position: absolute; left: 620px; top: 63px; width: 30px; height: 82px; border: 3px solid #000; border-radius: 9px; }
</style>
